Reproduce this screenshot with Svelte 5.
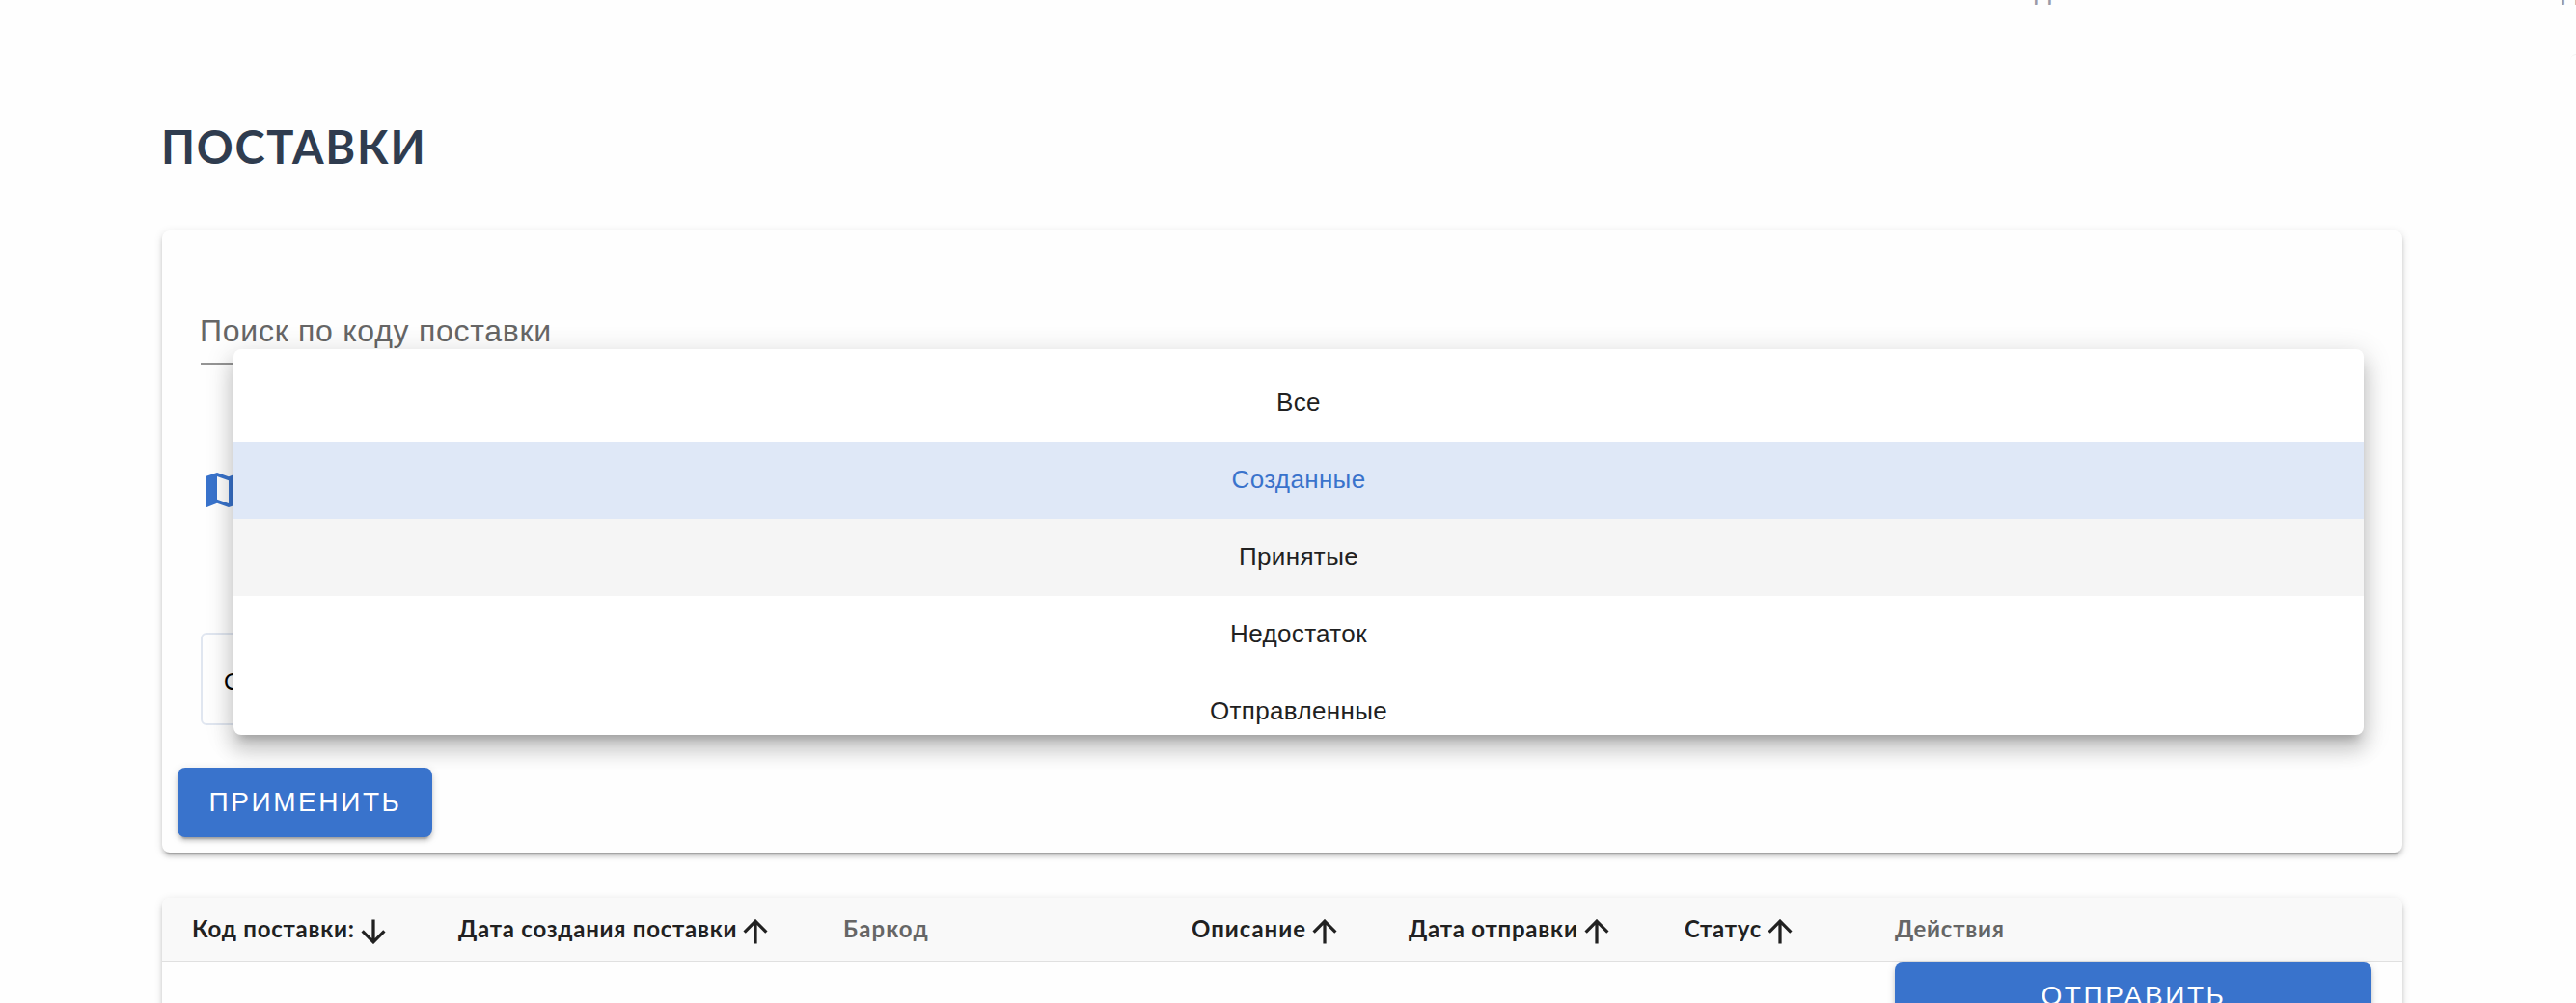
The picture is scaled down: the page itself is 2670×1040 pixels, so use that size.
<script>
  const options = ['Все', 'Созданные', 'Принятые', 'Недостаток', 'Отправленные'];
  const selected = 'Созданные';
  const hovered = 'Принятые';
  const columns = [
    { key: 'code', label: 'Код поставки:', sort: 'down' },
    { key: 'created', label: 'Дата создания поставки', sort: 'up' },
    { key: 'barcode', label: 'Баркод', sort: null },
    { key: 'about', label: 'Описание', sort: 'up' },
    { key: 'sent', label: 'Дата отправки', sort: 'up' },
    { key: 'status', label: 'Статус', sort: 'up' },
    { key: 'actions', label: 'Действия', sort: null },
  ];
</script>

<div class="page">
  <nav>
    <span class="create">Создание поставки</span>
    <span class="list">Поставки</span>
    <span class="exit">Выход</span>
  </nav>
  <div class="bubble"></div>

  <main>
    <h1>ПОСТАВКИ</h1>

    <section class="card filters">
      <div class="search">Поиск по коду поставки</div>
      <svg class="map" viewBox="0 0 24 24"><path d="M20.5 3l-.16.03L15 5.1 9 3 3.36 4.9c-.21.07-.36.25-.36.48V20.500c0 .28.22.5.5.5l.16-.03L9 18.900l6 2.100 5.640-1.900c.21-.07.36-.25.36-.48V3.500c0-.28-.22-.5-.5-.5zM15 19l-6-2.110V5l6 2.110V19z" /></svg>
      <div class="field">Созданные</div>
      <button class="apply">ПРИМЕНИТЬ</button>

      <div class="menu">
        {#each options as option}
          <div class="option" class:selected={option === selected} class:hovered={option === hovered}>{option}</div>
        {/each}
      </div>
    </section>

    <section class="card table">
      <div class="head">
        {#each columns as col}
          <div class="cell {col.key}" class:plain={!col.sort}>
            <span>{col.label}</span>
            {#if col.sort}
              <svg class="arrow" class:down={col.sort === 'down'} viewBox="0 0 24 24">
                <path d="M12 23.500V2M1.500 12.500L12 2L22.500 12.500" />
              </svg>
            {/if}
          </div>
        {/each}
      </div>
      <div class="row">
        <button class="send">ОТПРАВИТЬ</button>
      </div>
    </section>
  </main>
</div>

<style>
  .page {
    width: 2670px;
    height: 1040px;
    overflow: hidden;
    background: #fefefe;
    font-family: 'Liberation Sans', sans-serif;
    color: #212121;
    position: relative;
  }
  nav {
    height: 6px;
    display: flex;
    align-items: flex-end;
    padding-left: 2055px;
    white-space: nowrap;
    font: 500 28px/34px Lato, sans-serif;
    letter-spacing: 2.2px;
    color: #9a9aa8;
  }
  nav span { flex: none; }
  .create { width: 330px; letter-spacing: 2.4px; }
  .list { width: 194px; letter-spacing: 1.2px; }
  .bubble {
    position: absolute;
    left: 2664px;
    top: 56px;
    width: 12px;
    height: 12px;
    border-top: 1px solid #f2f2f2;
    border-radius: 50%;
  }
  main { padding: 0 180px 0 168px; }
  h1 {
    margin: 0;
    height: 233px;
    padding-top: 118px;
    box-sizing: border-box;
    font: 700 47px/56px Lato, sans-serif;
    letter-spacing: 1.75px;
    text-indent: -1px;
    color: #2f3c4f;
  }
  .card {
    background: #fefefe;
    border-radius: 8px;
    box-shadow: 0 6px 2px -4px rgba(0,0,0,.2), 0 4px 4px rgba(0,0,0,.14), 0 2px 10px rgba(0,0,0,.12);
  }
  .filters {
    position: relative;
    box-sizing: border-box;
    height: 645px;
    padding: 76px 40px 0;
    display: flex;
    flex-direction: column;
    align-items: flex-start;
  }
  .search {
    align-self: stretch;
    height: 63px;
    box-sizing: border-box;
    border-bottom: 2px solid #949494;
    font-size: 32px;
    line-height: 56px;
    letter-spacing: 0.74px;
    text-indent: -1px;
    color: #666;
  }
  .map {
    width: 48px;
    height: 48px;
    margin-top: 106px;
    margin-left: -1px;
    fill: #3973cc;
  }
  .field {
    align-self: stretch;
    box-sizing: border-box;
    height: 96px;
    margin-top: 124px;
    padding-left: 22px;
    border: 2px solid #e0e6f0;
    border-radius: 6px;
    font: 24px/96px Lato, sans-serif;
    color: #000;
  }
  button {
    border: 0;
    padding: 0 0 0 1px;
    border-radius: 8px;
    background: #3973cc;
    color: #fff;
    font: 28px/72px 'Liberation Sans', sans-serif;
    letter-spacing: 2.6px;
    box-shadow: 0 6px 2px -4px rgba(0,0,0,.2), 0 4px 4px rgba(0,0,0,.14), 0 2px 10px rgba(0,0,0,.12);
  }
  .apply { width: 264px; height: 72px; margin: 44px 0 0 -24px; }
  .menu {
    position: absolute;
    left: 74px;
    top: 123px;
    width: 2208px;
    height: 400px;
    box-sizing: border-box;
    padding-top: 16px;
    overflow: hidden;
    background: #fff;
    border-radius: 8px;
    box-shadow: 0 10px 10px -6px rgba(0,0,0,.2), 0 16px 20px 2px rgba(0,0,0,.14), 0 6px 28px 4px rgba(0,0,0,.12);
  }
  .option {
    height: 80px;
    line-height: 78px;
    text-align: center;
    font-size: 26px;
    letter-spacing: 0.35px;
  }
  .selected { background: #dfe8f7; color: #3973cc; }
  .hovered { background: #f5f5f5; }
  .table { margin-top: 47px; height: 300px; }
  .head {
    display: flex;
    box-sizing: border-box;
    height: 67px;
    padding: 0 0 2px 31px;
    background: #f9f9f9;
    border-bottom: 2px solid #e0e0e0;
    border-radius: 8px 8px 0 0;
    font: 700 24px/62px Lato, sans-serif;
    letter-spacing: 0.75px;
    white-space: nowrap;
  }
  .cell { flex: none; display: flex; align-items: center; gap: 6px; }
  .plain { color: #666; }
  .code { width: 276px; }
  .created { width: 399px; }
  .barcode { width: 361px; letter-spacing: 1.1px; }
  .about { width: 225px; letter-spacing: 1px; }
  .sent { width: 286px; }
  .status { width: 218px; }
  .arrow { width: 26px; height: 26px; fill: none; stroke: #212121; stroke-width: 3; margin-top: 6px; }
  .down { transform: rotate(180deg); }
  .row { display: flex; justify-content: flex-end; padding-right: 32px; }
  .send { width: 494px; height: 72px; line-height: 70px; padding-bottom: 2px; }
</style>
